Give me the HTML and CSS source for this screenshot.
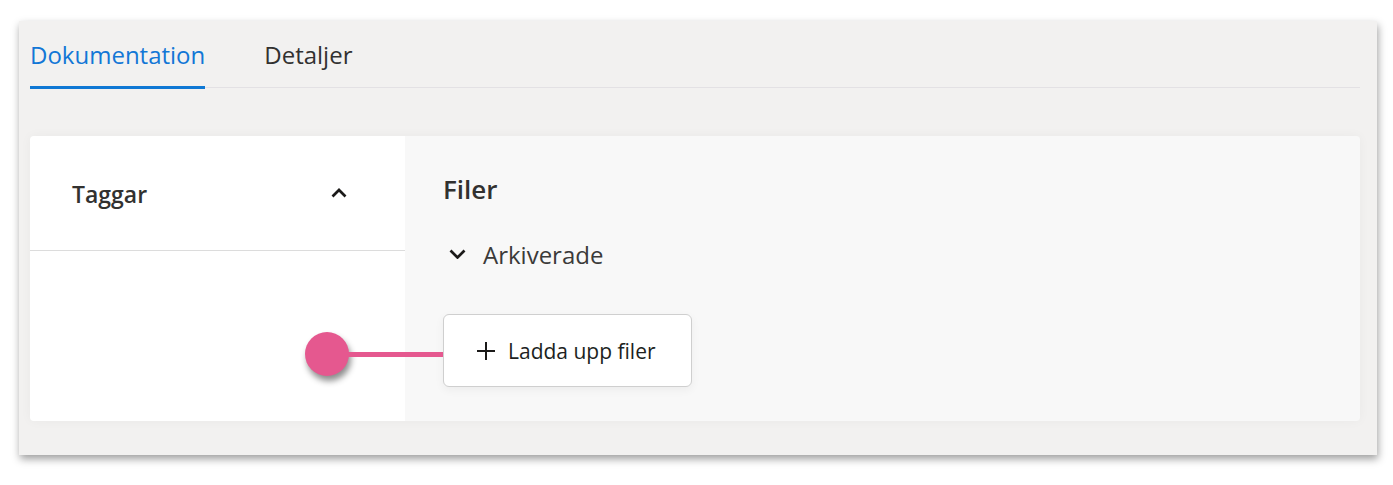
FILE: index.html
```html
<!DOCTYPE html>
<html lang="sv">
<head>
    <meta charset="UTF-8">
    <meta name="viewport" content="width=device-width, initial-scale=1.0">
    <title>Dokumentation</title>
    <link rel="stylesheet" href="styles.css">
</head>
<body>
    <div class="panel">
        <div class="tabs">
            <div class="tab active">Dokumentation</div>
            <div class="tab">Detaljer</div>
        </div>

        <div class="card">
            <div class="tags">
                <div class="tags-header">
                    <span class="tags-title">Taggar</span>
                    <svg class="chevron" width="16" height="10" viewBox="0 0 16 10"><path d="M1.5 8.5 L8 2 L14.5 8.5" fill="none" stroke="#1b1a19" stroke-width="2.7"/></svg>
                </div>
            </div>

            <div class="files">
                <h2 class="files-title">Filer</h2>
                <div class="archived">
                    <svg class="chevron" width="17" height="10" viewBox="0 0 17 10"><path d="M1.5 1.5 L8.5 8.5 L15.5 1.5" fill="none" stroke="#1b1a19" stroke-width="2.7"/></svg>
                    <span>Arkiverade</span>
                </div>
                <button class="upload">
                    <svg width="18" height="18" viewBox="0 0 18 18"><path d="M9 0 V18 M0 9 H18" stroke="#1b1a19" stroke-width="2"/></svg>
                    <span>Ladda upp filer</span>
                </button>
            </div>

            <!-- annotation pin pointing at the upload button -->
            <div class="pin">
                <div class="pin-dot"></div>
                <div class="pin-line"></div>
            </div>
        </div>
    </div>
</body>
</html>
```

FILE: styles.css
```css
body {
    margin: 0;
    padding: 21px 0 30px 19px;
    background-color: #fff;
    font-family: "Open Sans", "Noto Sans", sans-serif;
    color: #323130;
}
.panel {
    width: 1330px;
    height: 434px;
    padding: 0 17px 0 11px;
    background-color: #f2f1f0;
    box-shadow: 1px 4px 8px rgba(0, 0, 0, 0.38);
    box-sizing: content-box;
}
.tabs {
    display: flex;
    gap: 59px;
    height: 66px;
    border-bottom: 1px solid #e3e1e4;
}
.tab {
    display: flex;
    align-items: center;
    padding-top: 2px;
    font-size: 24px;
    color: #323130;
    border-bottom: 3px solid transparent;
    margin-bottom: -2px;
    box-sizing: border-box;
}
.tab.active {
    color: #1277d6;
    border-bottom-color: #0f78d4;
}
.card {
    position: relative;
    display: flex;
    height: 285px;
    margin-top: 48px;
    border-radius: 4px;
    overflow: hidden;
    box-shadow: 0 0 12px rgba(0, 0, 0, 0.04);
}
.tags {
    width: 375px;
    background-color: #fff;
}
.tags-header {
    display: flex;
    align-items: center;
    justify-content: space-between;
    height: 114px;
    padding: 0 58px 0 42px;
    border-bottom: 1px solid #dcdcdc;
}
.tags-title {
    font-size: 23px;
    font-weight: 600;
    line-height: 32px;
    padding-top: 2px;
}
.chevron {
    display: block;
}
.files {
    flex: 1;
    background-color: #f8f8f8;
    padding: 35px 0 0 38px;
}
.files-title {
    margin: 0;
    font-size: 26px;
    font-weight: 600;
    line-height: 36px;
}
.archived {
    display: flex;
    align-items: center;
    gap: 17px;
    height: 34px;
    margin-top: 30px;
    margin-left: 6px;
    font-size: 24px;
    color: #3b3a39;
}
.upload {
    display: flex;
    align-items: center;
    gap: 13px;
    width: 249px;
    height: 73px;
    margin-top: 43px;
    padding: 0 0 0 33px;
    background-color: #fff;
    border: 1px solid #cfcfcf;
    border-radius: 6px;
    box-shadow: 0 3px 10px rgba(0, 0, 0, 0.05);
    font-family: inherit;
    font-size: 21px;
    color: #201f1e;
    cursor: pointer;
}
.pin {
    position: absolute;
    left: 275px;
    top: 196px;
    display: flex;
    align-items: center;
}
.pin-dot {
    width: 44px;
    height: 44px;
    border-radius: 50%;
    background-color: #e5588f;
    box-shadow: 2px 5px 6px rgba(0, 0, 0, 0.45);
}
.pin-line {
    width: 96px;
    height: 5px;
    margin-left: -2px;
    background-color: #e5588f;
}
```
